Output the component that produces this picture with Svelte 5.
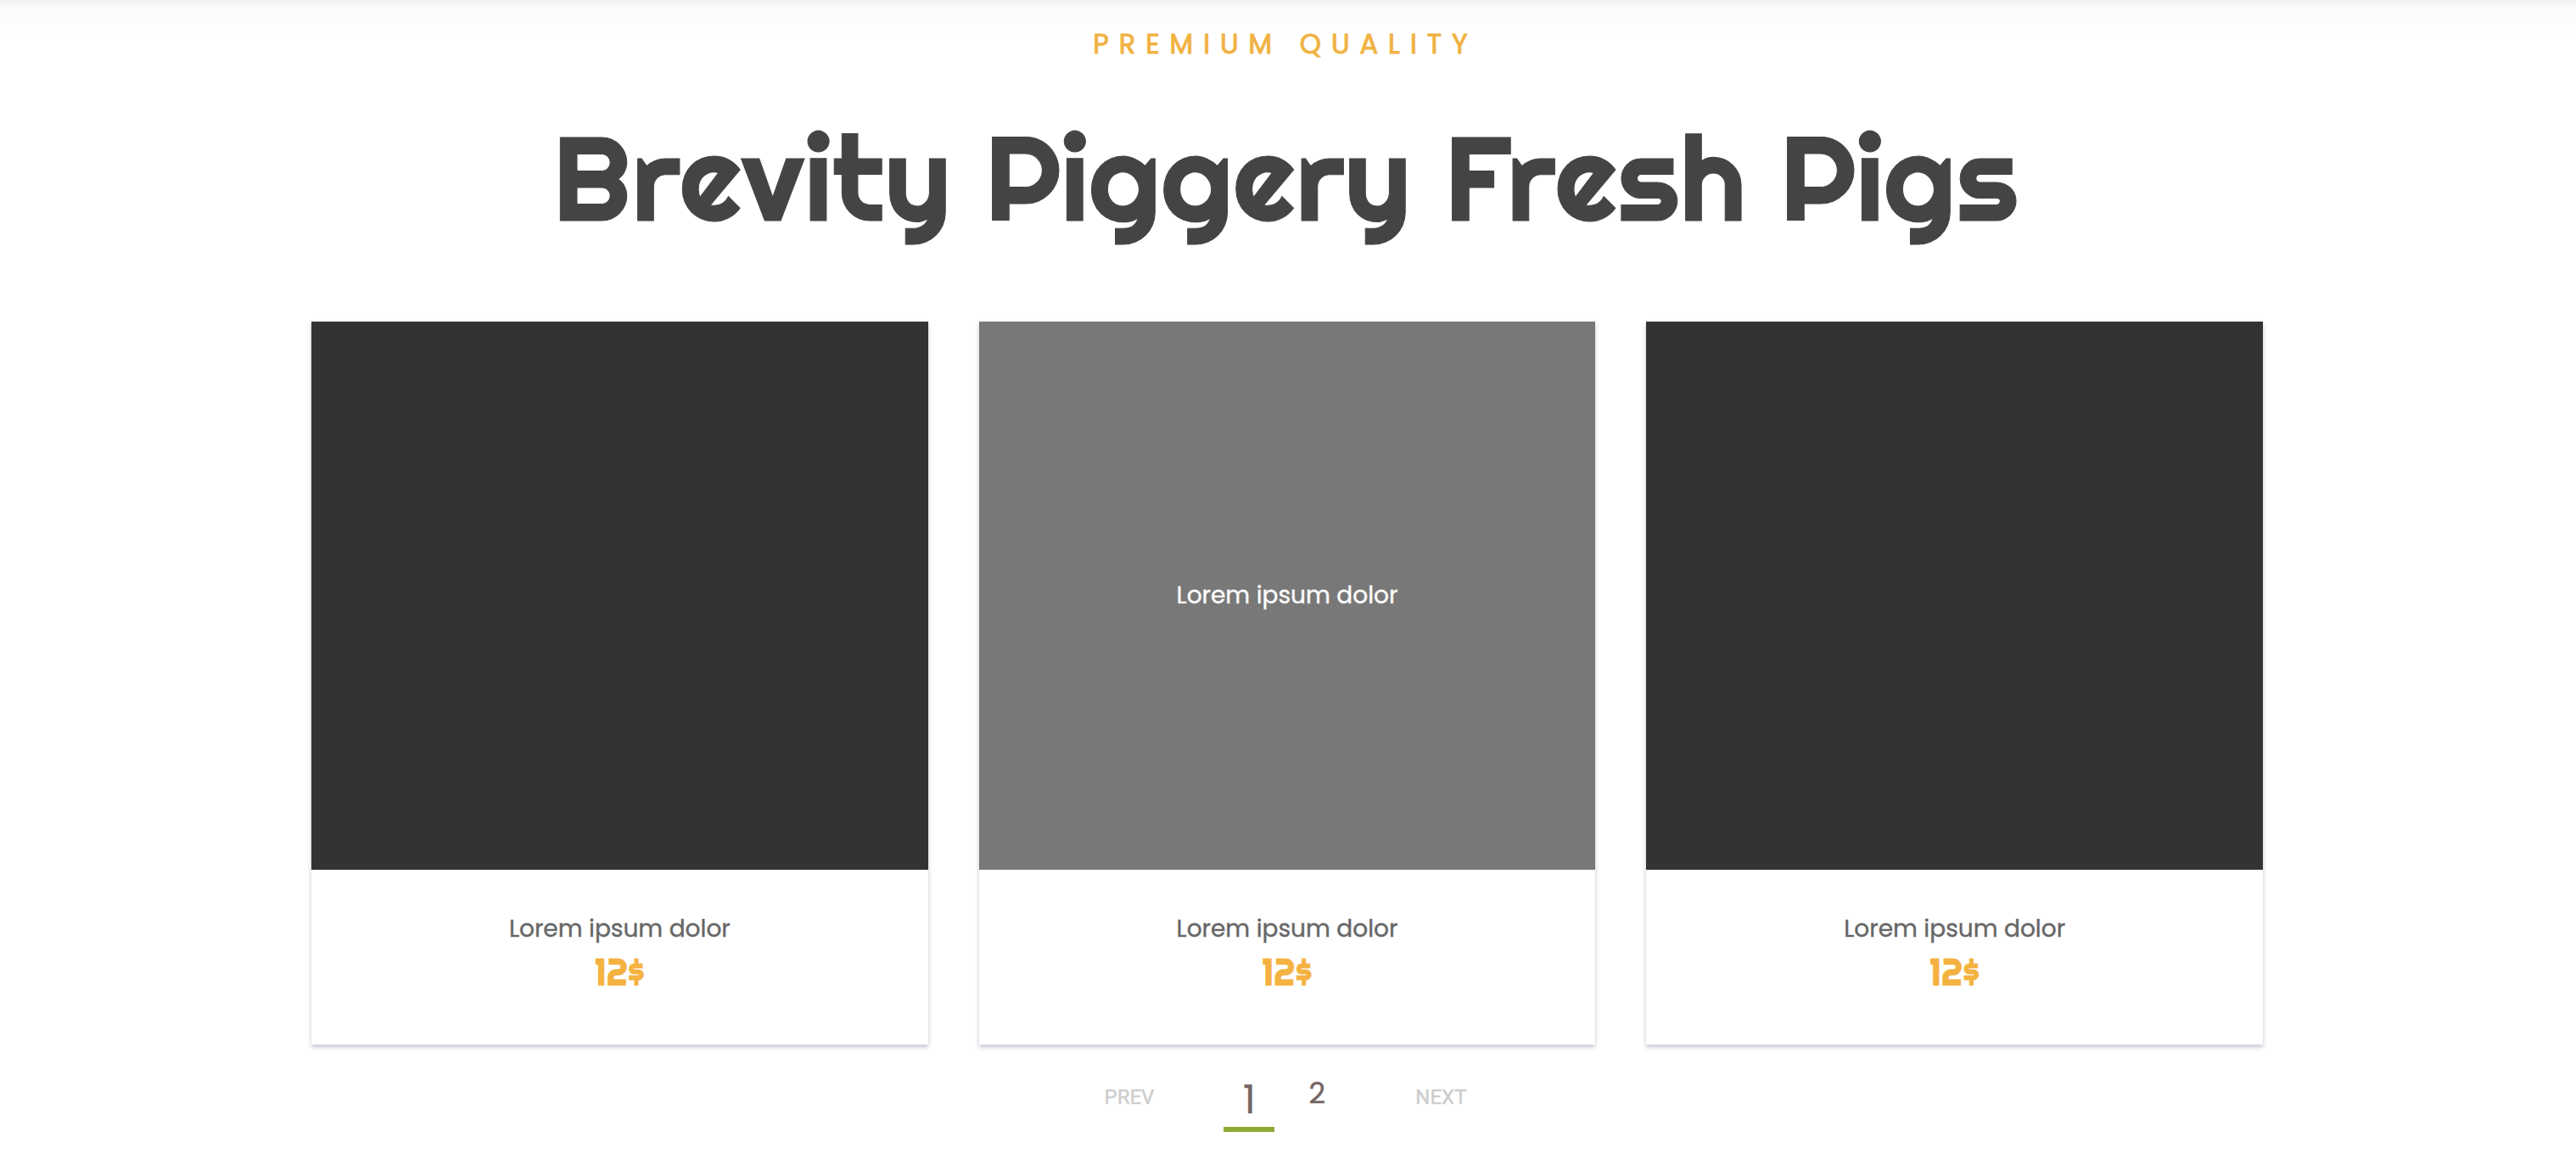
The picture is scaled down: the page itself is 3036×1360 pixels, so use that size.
<script>
  const products = [
    { name: 'Lorem ipsum dolor', price: '12$', active: false },
    { name: 'Lorem ipsum dolor', price: '12$', active: true },
    { name: 'Lorem ipsum dolor', price: '12$', active: false },
  ];
</script>

<section class="shop">
  <header>
    <p class="eyebrow">PREMIUM QUALITY</p>
    <h1>Brevity Piggery Fresh Pigs</h1>
  </header>

  <div class="products">
    {#each products as product}
      <article class="card">
        <div class="media" class:active={product.active}>
          {#if product.active}<span>{product.name}</span>{/if}
        </div>
        <div class="info">
          <h2>{product.name}</h2>
          <p class="price">{product.price}</p>
        </div>
      </article>
    {/each}
  </div>

  <nav class="pager" aria-label="Product pages">
    <button class="step" type="button">PREV</button>
    <div class="pages">
      <button class="page current" type="button" aria-current="page">1</button>
      <button class="page" type="button">2</button>
    </div>
    <button class="step" type="button">NEXT</button>
  </nav>
</section>

<style>
  :global(body) {
    margin: 0;
    background: #fff;
  }

  .shop {
    box-sizing: border-box;
    padding: 28px 34px 24px 32px;
    background: linear-gradient(#f2f2f2, #fafafa 8px, #fefefe 30px, #fff 40px);
    font-family: Poppins, Inter, sans-serif;
    text-align: center;
  }

  header {
    padding-right: 4px;
  }

  .eyebrow {
    margin: 0;
    color: #f1b243;
    font: 400 32px/48px Poppins, Lato, sans-serif;
    letter-spacing: 12px;
    -webkit-text-stroke: 1px #f1b243;
  }

  h1 {
    margin: 45px 0 0;
    color: #444;
    font: 400 140px/176px Righteous, Lato, sans-serif;
    -webkit-text-stroke: 1px #444;
  }

  .products {
    display: grid;
    grid-template-columns: repeat(3, 1fr);
    gap: 60px;
    max-width: 2300px;
    margin: 82px auto 0;
  }

  .card {
    background: #fff;
    box-shadow: 0 3px 5px rgba(60, 70, 100, 0.3);
  }

  .media {
    display: grid;
    place-items: center;
    height: 646px;
    background: #333;
    color: #fff;
    font-size: 28px;
    line-height: 40px;
  }

  .media.active {
    background: #787878;
  }

  .info {
    padding: 50px 24px 56px;
  }

  h2 {
    margin: 0;
    color: #666;
    font-size: 28px;
    font-weight: 400;
    line-height: 40px;
    -webkit-text-stroke: 1px rgba(102, 102, 102, 0.4);
  }

  .media span {
    -webkit-text-stroke: 1px rgba(255, 255, 255, 0.4);
  }

  .price {
    margin: 0;
    color: #f4b241;
    font: 400 44px/60px Righteous, Lato, sans-serif;
    -webkit-text-stroke: 1px #f4b241;
  }

  .pager {
    display: flex;
    justify-content: center;
    align-items: flex-start;
    gap: 82px;
    margin-top: 32px;
    padding-right: 4px;
  }

  .pages {
    display: flex;
    gap: 20px;
    padding-right: 4px;
  }

  button {
    padding: 0;
    border: 0;
    background: none;
    cursor: pointer;
  }

  .step {
    color: #ccc;
    font: 400 24px/60px Roboto, sans-serif;
    -webkit-text-stroke: 1px rgba(204, 204, 204, 0.4);
  }

  .page {
    width: 60px;
    height: 71px;
    padding-bottom: 21px;
    color: #756464;
    font: 400 34px/50px Poppins, Lato, sans-serif;
    -webkit-text-stroke: 1px rgba(117, 100, 100, 0.4);
  }

  .page.current {
    padding: 8px 0 7px;
    border-bottom: 6px solid #8cab33;
    font-size: 46px;
  }
</style>
